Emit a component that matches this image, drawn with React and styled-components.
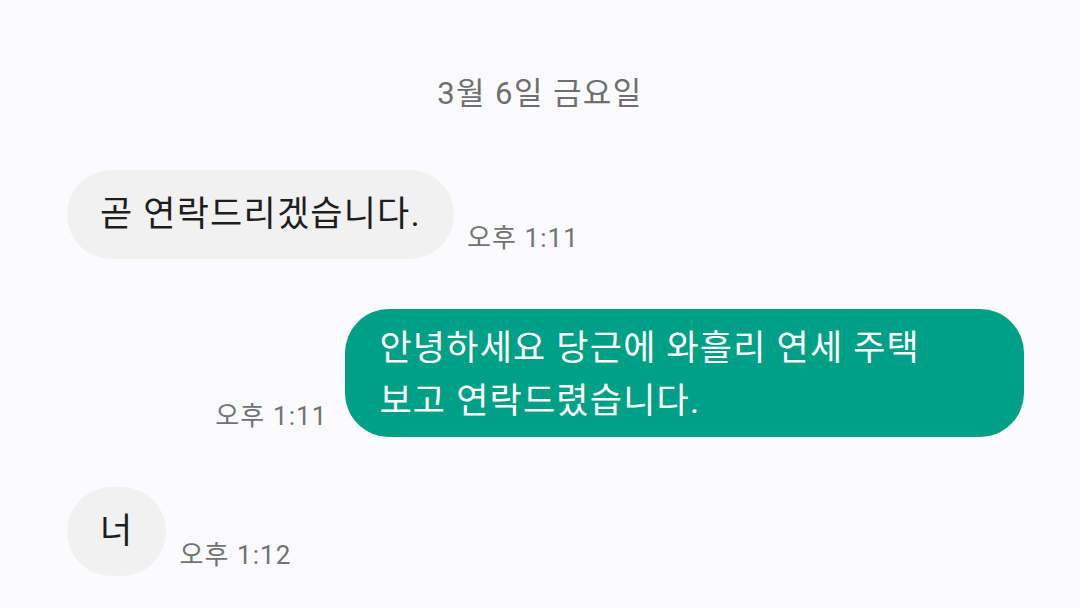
import React from 'react';
import styled, {createGlobalStyle} from 'styled-components';

const GlobalStyle = createGlobalStyle`
  html, body {
    margin: 0;
    padding: 0;
    background: #fbfbfd;
  }
  body {
    font-family: Roboto, "Noto Sans CJK KR", "Noto Sans", sans-serif;
  }
`

const messages = [
    {id: 1, mine: false, text: ['곧 연락드리겠습니다.'], time: '오후 1:11'},
    {id: 2, mine: true, text: ['안녕하세요 당근에 와흘리 연세 주택', '보고 연락드렸습니다.'], time: '오후 1:11'},
    {id: 3, mine: false, text: ['너'], time: '오후 1:12'},
]

const App = () => {
    return (
        <ChatWrapper>
            <GlobalStyle/>
            <DateLabel>3월 6일 금요일</DateLabel>
            <MessageList>
                {messages.map((msg) => (
                    <MessageRow key={msg.id} mine={msg.mine}>
                        {msg.mine && <TimeStamp>{msg.time}</TimeStamp>}
                        <Bubble mine={msg.mine} lines={msg.text.length}>
                            {msg.text.map((line, i) => <div key={i}>{line}</div>)}
                        </Bubble>
                        {!msg.mine && <TimeStamp>{msg.time}</TimeStamp>}
                    </MessageRow>
                ))}
            </MessageList>
        </ChatWrapper>
    )
}
export default App

const ChatWrapper = styled.div`
  width: 1080px;
  height: 608px;
  box-sizing: border-box;
  padding: 74px 56px 0 67px;
  display: flex;
  flex-direction: column;
  overflow: hidden;
`

const DateLabel = styled.div`
  text-align: center;
  font-size: 31px;
  line-height: 40px;
  letter-spacing: 1.4px;
  color: #6f6f72;
  margin-left: -11px;
`

const MessageList = styled.div`
  display: flex;
  flex-direction: column;
  gap: 50px;
  margin-top: 56px;
`

const MessageRow = styled.div`
  display: flex;
  align-items: flex-end;
  justify-content: ${({mine}) => (mine ? 'flex-end' : 'flex-start')};
  gap: ${({mine}) => (mine ? '18px' : '13px')};
`

const Bubble = styled.div`
  box-sizing: border-box;
  font-size: 35px;
  letter-spacing: 1.2px;
  color: ${({mine}) => (mine ? '#ffffff' : '#1e1e1e')};
  background: ${({mine}) => (mine ? '#00a086' : '#f1f1f2')};
  border-radius: ${({mine}) => (mine ? '44px' : '45px')};
  line-height: ${({lines}) => (lines > 1 ? '53px' : '45px')};
  padding: ${({lines}) => (lines > 1 ? '13px 104px 9px 34px' : '22px 33px')};
  min-width: 98px;
  text-align: ${({lines}) => (lines > 1 ? 'left' : 'center')};
  white-space: nowrap;
`

const TimeStamp = styled.div`
  font-size: 26px;
  line-height: 30px;
  letter-spacing: 1.1px;
  color: #727275;
  margin-bottom: 6px;
  white-space: nowrap;
`
